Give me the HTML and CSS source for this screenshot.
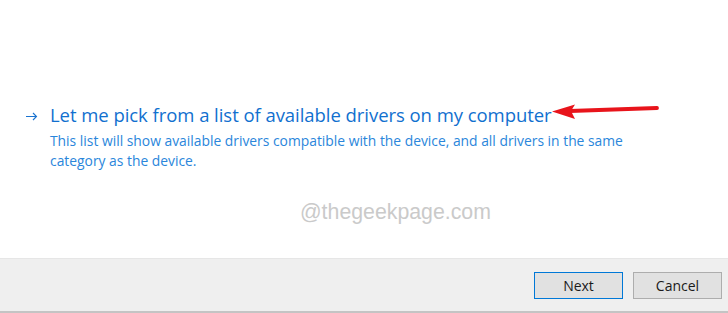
FILE: index.html
```html
<!DOCTYPE html>
<html lang="en">
<head>
  <meta charset="UTF-8">
  <title>Update Drivers</title>
  <link rel="stylesheet" href="styles.css">
</head>
<body>
  <div class="dialog">
    <div class="content">
      <div class="option">
        <svg class="option-arrow" width="24" height="26" viewBox="0 0 24 26">
          <path d="M0 14.5 H10.5 M7 11 L10.5 14.5 L7 18" fill="none" stroke="#1a73d0" stroke-width="1.1"/>
        </svg>
        <div class="option-text">
          <div class="option-title">Let me pick from a list of available drivers on my computer</div>
          <div class="option-desc">This list will show available drivers compatible with the device, and all drivers in the same category as the device.</div>
        </div>
      </div>
      <div class="watermark">@thegeekpage.com</div>

      <svg class="red-arrow" width="120" height="24" viewBox="0 0 120 24">
        <line x1="19" y1="13" x2="106" y2="10" stroke="#e8141b" stroke-width="3.8" stroke-linecap="round"/>
        <polygon points="1,13.5 24,6.5 20,13 24,21" fill="#e8141b"/>
      </svg>
    </div>

    <div class="footer">
      <button class="btn btn-primary">Next</button>
      <button class="btn">Cancel</button>
    </div>
  </div>
</body>
</html>
```

FILE: styles.css
```css
body {
  margin: 0;
  background: #ffffff;
  font-family: "Open Sans", "Noto Sans", sans-serif;
}

.dialog {
  width: 728px;
  height: 313px;
  display: flex;
  flex-direction: column;
}

.content {
  flex: 1;
  position: relative;
  padding: 102px 0 0 26px;
}

.option {
  display: flex;
  align-items: flex-start;
}

.option-title {
  color: #1170cf;
  font-size: 18.5px;
  line-height: 26px;
  letter-spacing: -0.05px;
}

.option-desc {
  color: #2a86db;
  font-size: 13.85px;
  line-height: 20px;
  width: 600px;
  margin-top: 3px;
}

.watermark {
  margin: 29px 0 0 274px;
  font-family: "Liberation Sans", Arial, sans-serif;
  font-size: 21.3px;
  color: #cacaca;
}

.red-arrow {
  position: absolute;
  left: 551px;
  top: 98px;
}

.footer {
  height: 52px;
  background: #efefef;
  border-top: 1px solid #e6e6e6;
  border-bottom: 2px solid #c4c4c4;
  display: flex;
  justify-content: flex-end;
  align-items: center;
  gap: 10px;
  padding-right: 6px;
}

.btn {
  width: 89px;
  height: 27px;
  background: #e1e1e1;
  border: 1px solid #adadad;
  font-family: "Open Sans", "Noto Sans", sans-serif;
  font-size: 14px;
  color: #1a1a1a;
  padding: 0;
}

.btn-primary {
  border: 1px solid #0078d7;
}
```
